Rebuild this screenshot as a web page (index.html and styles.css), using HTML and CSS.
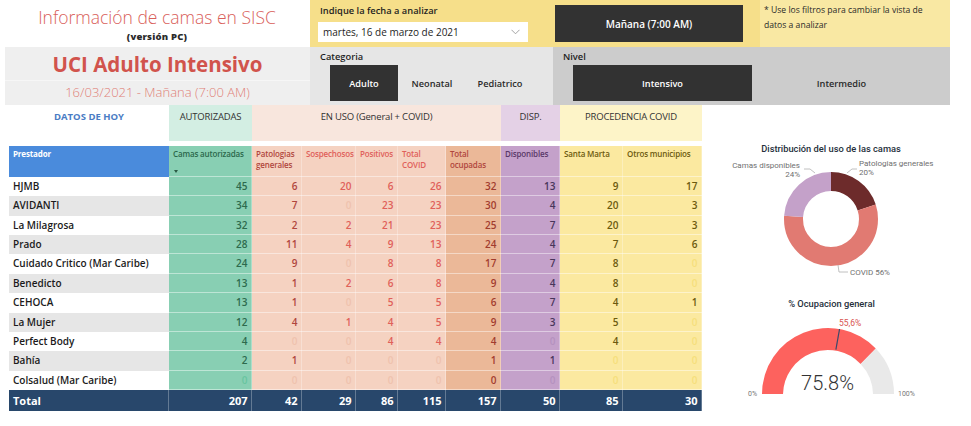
FILE: index.html
```html
<!DOCTYPE html>
<html lang="es">
<head>
<meta charset="utf-8">
<title>Información de camas en SISC</title>
<link rel="stylesheet" href="styles.css">
</head>
<body>
<div class="page">
  <header class="top">
    <div class="brand">
      <div class="brand-title">Información de camas en SISC</div>
      <div class="brand-sub">(versión PC)</div>
    </div>
    <div class="date-panel">
      <div class="panel-label">Indique la fecha a analizar</div>
      <div class="dropdown">
        <span>martes, 16 de marzo de 2021</span>
        <svg class="chev" width="9" height="6" viewBox="0 0 9 6"><polyline points="0.5,0.8 4.5,4.8 8.5,0.8" fill="none" stroke="#9a9a9a" stroke-width="0.9"/></svg>
      </div>
    </div>
    <div class="turn-panel"><div class="btn on turn">Mañana (7:00 AM)</div></div>
    <div class="note">* Use los filtros para cambiar la vista de datos a analizar</div>
    <div class="unit">
      <div class="unit-title">UCI Adulto Intensivo</div>
      <div class="unit-date">16/03/2021 - Mañana (7:00 AM)</div>
    </div>
    <div class="cat">
      <div class="panel-label">Categoria</div>
      <div class="btns">
        <div class="btn on cbtn">Adulto</div>
        <div class="btn cbtn">Neonatal</div>
        <div class="btn cbtn">Pediatrico</div>
      </div>
    </div>
    <div class="nivel">
      <div class="panel-label">Nivel</div>
      <div class="btns">
        <div class="btn on nbtn">Intensivo</div>
        <div class="btn nbtn">Intermedio</div>
      </div>
    </div>
  </header>

  <main class="main">
    <section class="tablewrap">
      <div class="bands">
        <div class="band band-hoy">DATOS DE HOY</div>
        <div class="band b-aut">AUTORIZADAS</div>
        <div class="band b-uso">EN USO (General + COVID)</div>
        <div class="band b-disp">DISP.</div>
        <div class="band b-proc">PROCEDENCIA COVID</div>
      </div>
      <div class="grid">
        <div class="row thead">
          <span>Prestador</span>
          <span>Camas autorizadas<i class="sort"></i></span>
          <span>Patologias generales</span>
          <span>Sospechosos</span>
          <span>Positivos</span>
          <span>Total COVID</span>
          <span>Total ocupadas</span>
          <span>Disponibles</span>
          <span>Santa Marta</span>
          <span>Otros municipios</span>
        </div>
        <div class="row"><span>HJMB</span><span>45</span><span>6</span><span>20</span><span>6</span><span>26</span><span>32</span><span>13</span><span>9</span><span>17</span></div>
        <div class="row alt"><span>AVIDANTI</span><span>34</span><span>7</span><span class="z">0</span><span>23</span><span>23</span><span>30</span><span>4</span><span>20</span><span>3</span></div>
        <div class="row"><span>La Milagrosa</span><span>32</span><span>2</span><span>2</span><span>21</span><span>23</span><span>25</span><span>7</span><span>20</span><span>3</span></div>
        <div class="row alt"><span>Prado</span><span>28</span><span>11</span><span>4</span><span>9</span><span>13</span><span>24</span><span>4</span><span>7</span><span>6</span></div>
        <div class="row"><span>Cuidado Critico (Mar Caribe)</span><span>24</span><span>9</span><span class="z">0</span><span>8</span><span>8</span><span>17</span><span>7</span><span>8</span><span class="z">0</span></div>
        <div class="row alt"><span>Benedicto</span><span>13</span><span>1</span><span>2</span><span>6</span><span>8</span><span>9</span><span>4</span><span>8</span><span class="z">0</span></div>
        <div class="row"><span>CEHOCA</span><span>13</span><span>1</span><span class="z">0</span><span>5</span><span>5</span><span>6</span><span>7</span><span>4</span><span>1</span></div>
        <div class="row alt"><span>La Mujer</span><span>12</span><span>4</span><span>1</span><span>4</span><span>5</span><span>9</span><span>3</span><span>5</span><span class="z">0</span></div>
        <div class="row"><span>Perfect Body</span><span>4</span><span class="z">0</span><span class="z">0</span><span>4</span><span>4</span><span>4</span><span class="z">0</span><span>4</span><span class="z">0</span></div>
        <div class="row alt"><span>Bahía</span><span>2</span><span>1</span><span class="z">0</span><span class="z">0</span><span class="z">0</span><span>1</span><span>1</span><span class="z">0</span><span class="z">0</span></div>
        <div class="row"><span>Colsalud (Mar Caribe)</span><span class="z">0</span><span class="z">0</span><span class="z">0</span><span class="z">0</span><span class="z">0</span><span>0</span><span class="z">0</span><span class="z">0</span><span class="z">0</span></div>
        <div class="row total"><span>Total</span><span>207</span><span>42</span><span>29</span><span>86</span><span>115</span><span>157</span><span>50</span><span>85</span><span>30</span></div>
      </div>
    </section>

    <aside class="charts">
      <svg class="chart-svg" width="269" height="321" viewBox="0 0 269 321">
        <text class="ch-title" x="129" y="47" text-anchor="middle">Distribución del uso de las camas</text>
        <g transform="rotate(-90 129 114)">
          <circle cx="129" cy="114" r="37.5" fill="none" stroke="#6d2b2b" stroke-width="19" stroke-dasharray="47.12 188.5" stroke-dashoffset="0"/>
          <circle cx="129" cy="114" r="37.5" fill="none" stroke="#e17a72" stroke-width="19" stroke-dasharray="131.95 103.67" stroke-dashoffset="-47.12"/>
          <circle cx="129" cy="114" r="37.5" fill="none" stroke="#c4a1c9" stroke-width="19" stroke-dasharray="56.55 179.07" stroke-dashoffset="-179.07"/>
        </g>
        <polyline points="102,64 108,64 113,68" fill="none" stroke="#b0b0b0" stroke-width="0.8"/>
        <polyline points="145,68 150,64 155,64" fill="none" stroke="#b0b0b0" stroke-width="0.8"/>
        <polyline points="136,160 137,167 146,167" fill="none" stroke="#b0b0b0" stroke-width="0.8"/>
        <text class="ch-lbl" x="98" y="63" text-anchor="end">Camas disponibles</text>
        <text class="ch-lbl" x="98" y="71.5" text-anchor="end">24%</text>
        <text class="ch-lbl" x="157" y="61" text-anchor="start">Patologias generales</text>
        <text class="ch-lbl" x="157" y="70" text-anchor="start">20%</text>
        <text class="ch-lbl" x="148" y="170" text-anchor="start">COVID 56%</text>

        <text class="ch-title" x="129.5" y="201.5" text-anchor="middle">% Ocupacion general</text>
        <path d="M 60 289 A 66 66 0 0 1 173.82 243.51 L 158.61 258.99 A 45 45 0 0 0 81 289 Z" fill="#fd625e"/>
        <path d="M 173.82 243.51 A 66 66 0 0 1 192 289 L 171 289 A 45 45 0 0 0 158.61 258.99 Z" fill="#e9e9e9"/>
        <line x1="133.88" y1="244.69" x2="137.55" y2="224.02" stroke="#3a4a6b" stroke-width="1.2"/>
        <text class="g-target" x="137" y="221">55,6%</text>
        <text class="g-value" x="125.5" y="285" text-anchor="middle">75.8%</text>
        <text class="g-end" x="46" y="290.5">0%</text>
        <text class="g-end" x="196" y="290.5">100%</text>
      </svg>
    </aside>
  </main>
</div>
</body>
</html>
```

FILE: styles.css
```css
* { box-sizing: border-box; margin: 0; padding: 0; }
html, body { width: 971px; height: 426px; overflow: hidden; background: #ffffff; }
body { font-family: "Open Sans", "Noto Sans", sans-serif; color: #252423; }

.page { width: 971px; height: 426px; }

/* ---------- top ---------- */
.top {
  display: grid;
  grid-template-columns: 310px 243px 207px 190px;
  grid-template-rows: 47px 58px;
}
.brand { grid-column: 1; grid-row: 1; text-align: center; padding: 5px 0 0 4px; }
.brand-title { font-weight: 300; font-size: 17.5px; line-height: 24px; color: #d9605a; }
.brand-sub { font-weight: 800; font-size: 9.5px; line-height: 10px; color: #2b2b2b; margin-top: 3px; letter-spacing: 0.2px; }

.date-panel { grid-column: 2; grid-row: 1; background: #f6df8a; padding: 4px 0 0 8px; }
.panel-label { font-weight: 600; font-size: 9.3px; line-height: 13px; color: #1e1e1e; padding-left: 2px; }
.dropdown {
  margin-top: 5px; width: 210px; height: 20px; background: #ffffff;
  display: flex; align-items: center; justify-content: space-between;
  padding: 0 8px 0 5px; font-size: 10px; color: #1e1e1e;
}
.chev { display: block; }

.turn-panel { grid-column: 3; grid-row: 1; background: #f6df8a; padding: 5px 0 0 2px; }
.btn { display: flex; align-items: center; justify-content: center; font-weight: 600; font-size: 9.2px; color: #2a2a2a; }
.btn.on { background: #323232; color: #ffffff; }
.turn { width: 188px; height: 37px; font-size: 10px; }

.note { grid-column: 4; grid-row: 1; background: #f9e8a3; padding: 3px 18px 0 4px; font-size: 8.6px; line-height: 15px; color: #2a2a2a; }

.unit { grid-column: 1; grid-row: 2; margin-left: 5px; background: #efefef; display: flex; flex-direction: column; }
.unit-title { height: 34px; line-height: 34px; text-align: center; font-weight: 700; font-size: 20.5px; color: #d1534c; border-bottom: 1px solid #f6f6f6; }
.unit-date { flex: 1; line-height: 23px; text-align: center; font-weight: 300; font-size: 13px; color: #df7f78; }

.cat { grid-column: 2; grid-row: 2; background: #e6e6e6; padding: 3px 0 0 8px; }
.nivel { grid-column: 3 / span 2; grid-row: 2; background: #cccccc; padding: 3px 0 0 8px; }
.btns { display: flex; margin-top: 2px; }
.cbtn { width: 68px; height: 36px; }
.cat .btns { padding-left: 12px; }
.nivel .btns { padding-left: 12px; }
.nbtn { width: 179px; height: 36px; }

/* ---------- main ---------- */
.main { display: flex; }
.tablewrap { width: 702px; padding-left: 9px; }

.bands {
  display: grid;
  grid-template-columns: 160px 83px 249px 59px 142px;
  height: 36px;
  margin-bottom: 5px;
}
.band { font-size: 9.5px; line-height: 13px; padding-top: 5px; text-align: center; color: #333333; letter-spacing: -0.2px; }
.band-hoy { color: #4a7cc4; font-weight: 700; letter-spacing: 0; }
.b-aut { background: #d3eee3; }
.b-uso { background: #f8e6dd; }
.b-disp { background: #e4d1e6; }
.b-proc { background: #fdf4c8; }

.row {
  display: grid;
  grid-template-columns: 160px 83px 50px 54px 42px 48px 55px 59px 63px 79px;
  height: 19.36px;
}
.row > span {
  background: var(--bg);
  color: var(--fg);
  font-weight: 600;
  font-size: 10px;
  line-height: 19px;
  text-align: right;
  padding-right: 4.5px;
  white-space: nowrap;
  overflow: hidden;
  box-shadow: inset -1px 0 rgba(255,255,255,0.3), inset 0 -1px rgba(255,255,255,0.45);
}
.row > span.z { color: var(--zero); }

.row > span:nth-child(1) { --bg: #ffffff; --fg: #1b1b1b; text-align: left; padding-left: 4px; box-shadow: none; }
.row.alt > span:nth-child(1) { --bg: #e6e6e6; }
.row > span:nth-child(2) { --bg: #88cfb3; --fg: #2d6a4d; --zero: #68c5a0; --hd: #2b684b; }
.row > span:nth-child(3) { --bg: #f5d2c1; --fg: #b0463d; --zero: #efc2ae; --hd: #b0463d; }
.row > span:nth-child(4),
.row > span:nth-child(5),
.row > span:nth-child(6) { --bg: #f5d2c1; --fg: #e0605a; --zero: #efc2ae; --hd: #e0605a; }
.row > span:nth-child(7) { --bg: #ebb898; --fg: #a23c2e; --zero: #e2a784; --hd: #b0463d; }
.row > span:nth-child(8) { --bg: #c4a1ca; --fg: #48355a; --zero: #b592bf; --hd: #5a3868; }
.row > span:nth-child(9),
.row > span:nth-child(10) { --bg: #fbe9a0; --fg: #6c5a0e; --zero: #f6df7c; --hd: #6c5a0e; }

.thead { height: 31px; }
.thead > span {
  color: var(--hd);
  font-size: 8px;
  line-height: 10.5px;
  text-align: left;
  padding: 3px 3px 0 4px;
  white-space: normal;
  letter-spacing: -0.15px;
  position: relative;
}
.thead > span:nth-child(1) { --bg: #4a8bdc; color: #ffffff; font-weight: 700; padding-top: 3px; }
.sort {
  position: absolute; left: 5px; bottom: 4px;
  width: 0; height: 0;
  border-left: 2.5px solid transparent; border-right: 2.5px solid transparent;
  border-top: 3px solid #2b5a44;
}

.row.total { height: 21px; }
.row.total > span {
  --bg: #28476b; color: #ffffff;
  font-weight: 700; font-size: 11px; line-height: 21px;
  box-shadow: inset -1px 0 rgba(255,255,255,0.28);
}
.row.total > span:nth-child(1) { --bg: #28476b; color: #ffffff; }

/* ---------- charts ---------- */
.charts { width: 269px; }
.chart-svg { display: block; }
.ch-title { font-family: "Roboto", "Open Sans", sans-serif; font-weight: 500; font-size: 9.3px; fill: #252f3b; }
.ch-lbl { font-family: "Roboto", "Open Sans", sans-serif; font-size: 8px; fill: #6f6f6f; }
.g-target { font-family: "Roboto", "Open Sans", sans-serif; font-size: 8.5px; fill: #d9534f; }
.g-value { font-family: "Roboto", "Open Sans", sans-serif; font-weight: 300; font-size: 20px; fill: #333333; }
.g-end { font-family: "Roboto", "Open Sans", sans-serif; font-size: 7px; fill: #777777; }
```
